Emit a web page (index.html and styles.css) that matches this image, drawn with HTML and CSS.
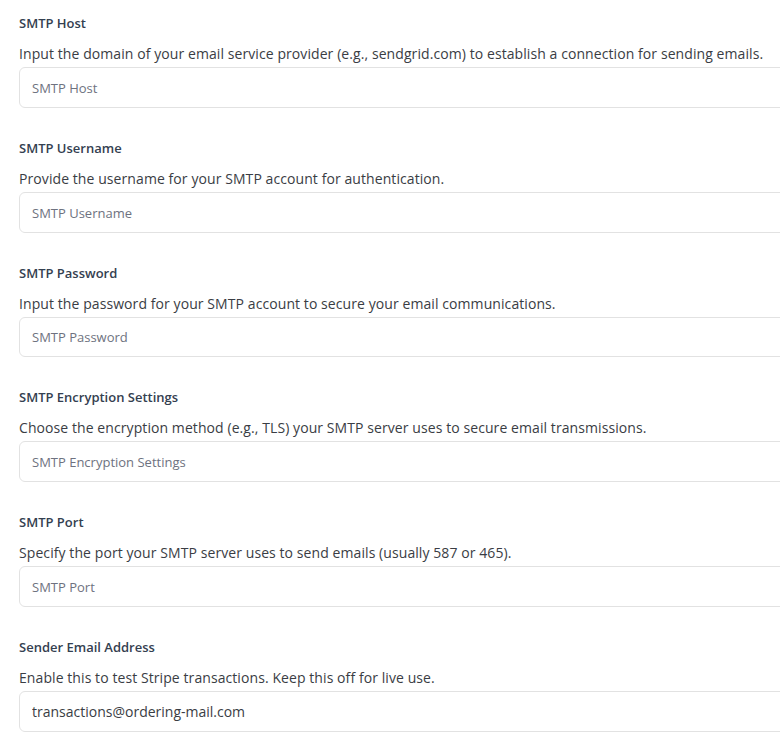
FILE: index.html
```html
<!DOCTYPE html>
<html lang="en">
<head>
	<meta charset="UTF-8">
	<title>SMTP Settings</title>
	<link rel="stylesheet" href="styles.css">
</head>
<body>
	<main class="settings">
		<section class="field">
			<label class="title" for="host">SMTP Host</label>
			<p class="desc">Input the domain of your email service provider (e.g., sendgrid.com) to establish a connection for sending emails.</p>
			<input type="text" id="host" placeholder="SMTP Host">
		</section>
		<section class="field">
			<label class="title" for="user">SMTP Username</label>
			<p class="desc">Provide the username for your SMTP account for authentication.</p>
			<input type="text" id="user" placeholder="SMTP Username">
		</section>
		<section class="field">
			<label class="title" for="pass">SMTP Password</label>
			<p class="desc">Input the password for your SMTP account to secure your email communications.</p>
			<input type="text" id="pass" placeholder="SMTP Password">
		</section>
		<section class="field">
			<label class="title" for="enc">SMTP Encryption Settings</label>
			<p class="desc">Choose the encryption method (e.g., TLS) your SMTP server uses to secure email transmissions.</p>
			<input type="text" id="enc" placeholder="SMTP Encryption Settings">
		</section>
		<section class="field">
			<label class="title" for="port">SMTP Port</label>
			<p class="desc">Specify the port your SMTP server uses to send emails (usually 587 or 465).</p>
			<input type="text" id="port" placeholder="SMTP Port">
		</section>
		<section class="field">
			<label class="title" for="sender">Sender Email Address</label>
			<p class="desc">Enable this to test Stripe transactions. Keep this off for live use.</p>
			<input type="text" id="sender" placeholder="Sender Email Address" value="transactions@ordering-mail.com">
		</section>
	</main>
</body>
</html>
```

FILE: styles.css
```css
/* page */
body {
	background-color: #fff;
	font-family: "Open Sans", "Liberation Sans", sans-serif;
	margin: 0px;
	overflow: hidden;
}
main.settings {
	display: flex;
	flex-direction: column;
	gap: 30px;
	padding: 13px 0px 0px 19px;
	width: 800px;
}

/* section.field */
section.field {
	display: flex;
	flex-direction: column;
}
section.field .title {
	color: #344050;
	font-size: 13px;
	font-weight: 600;
	line-height: 20px;
}
section.field .desc {
	color: #3a3d44;
	font-size: 14px;
	letter-spacing: 0.08px;
	line-height: 20px;
	margin: 11px 0px 3px 0px;
	white-space: nowrap;
}
section.field input {
	border: 1px solid #e2e2e2;
	border-radius: 6px;
	box-sizing: border-box;
	color: #3a3d44;
	font: 14px "Open Sans", "Liberation Sans", sans-serif;
	height: 40.8px;
	outline: none;
	padding: 0px 12px;
	width: 100%;
}
section.field input::placeholder {
	color: #6e7280;
	font-size: 13px;
}
```
